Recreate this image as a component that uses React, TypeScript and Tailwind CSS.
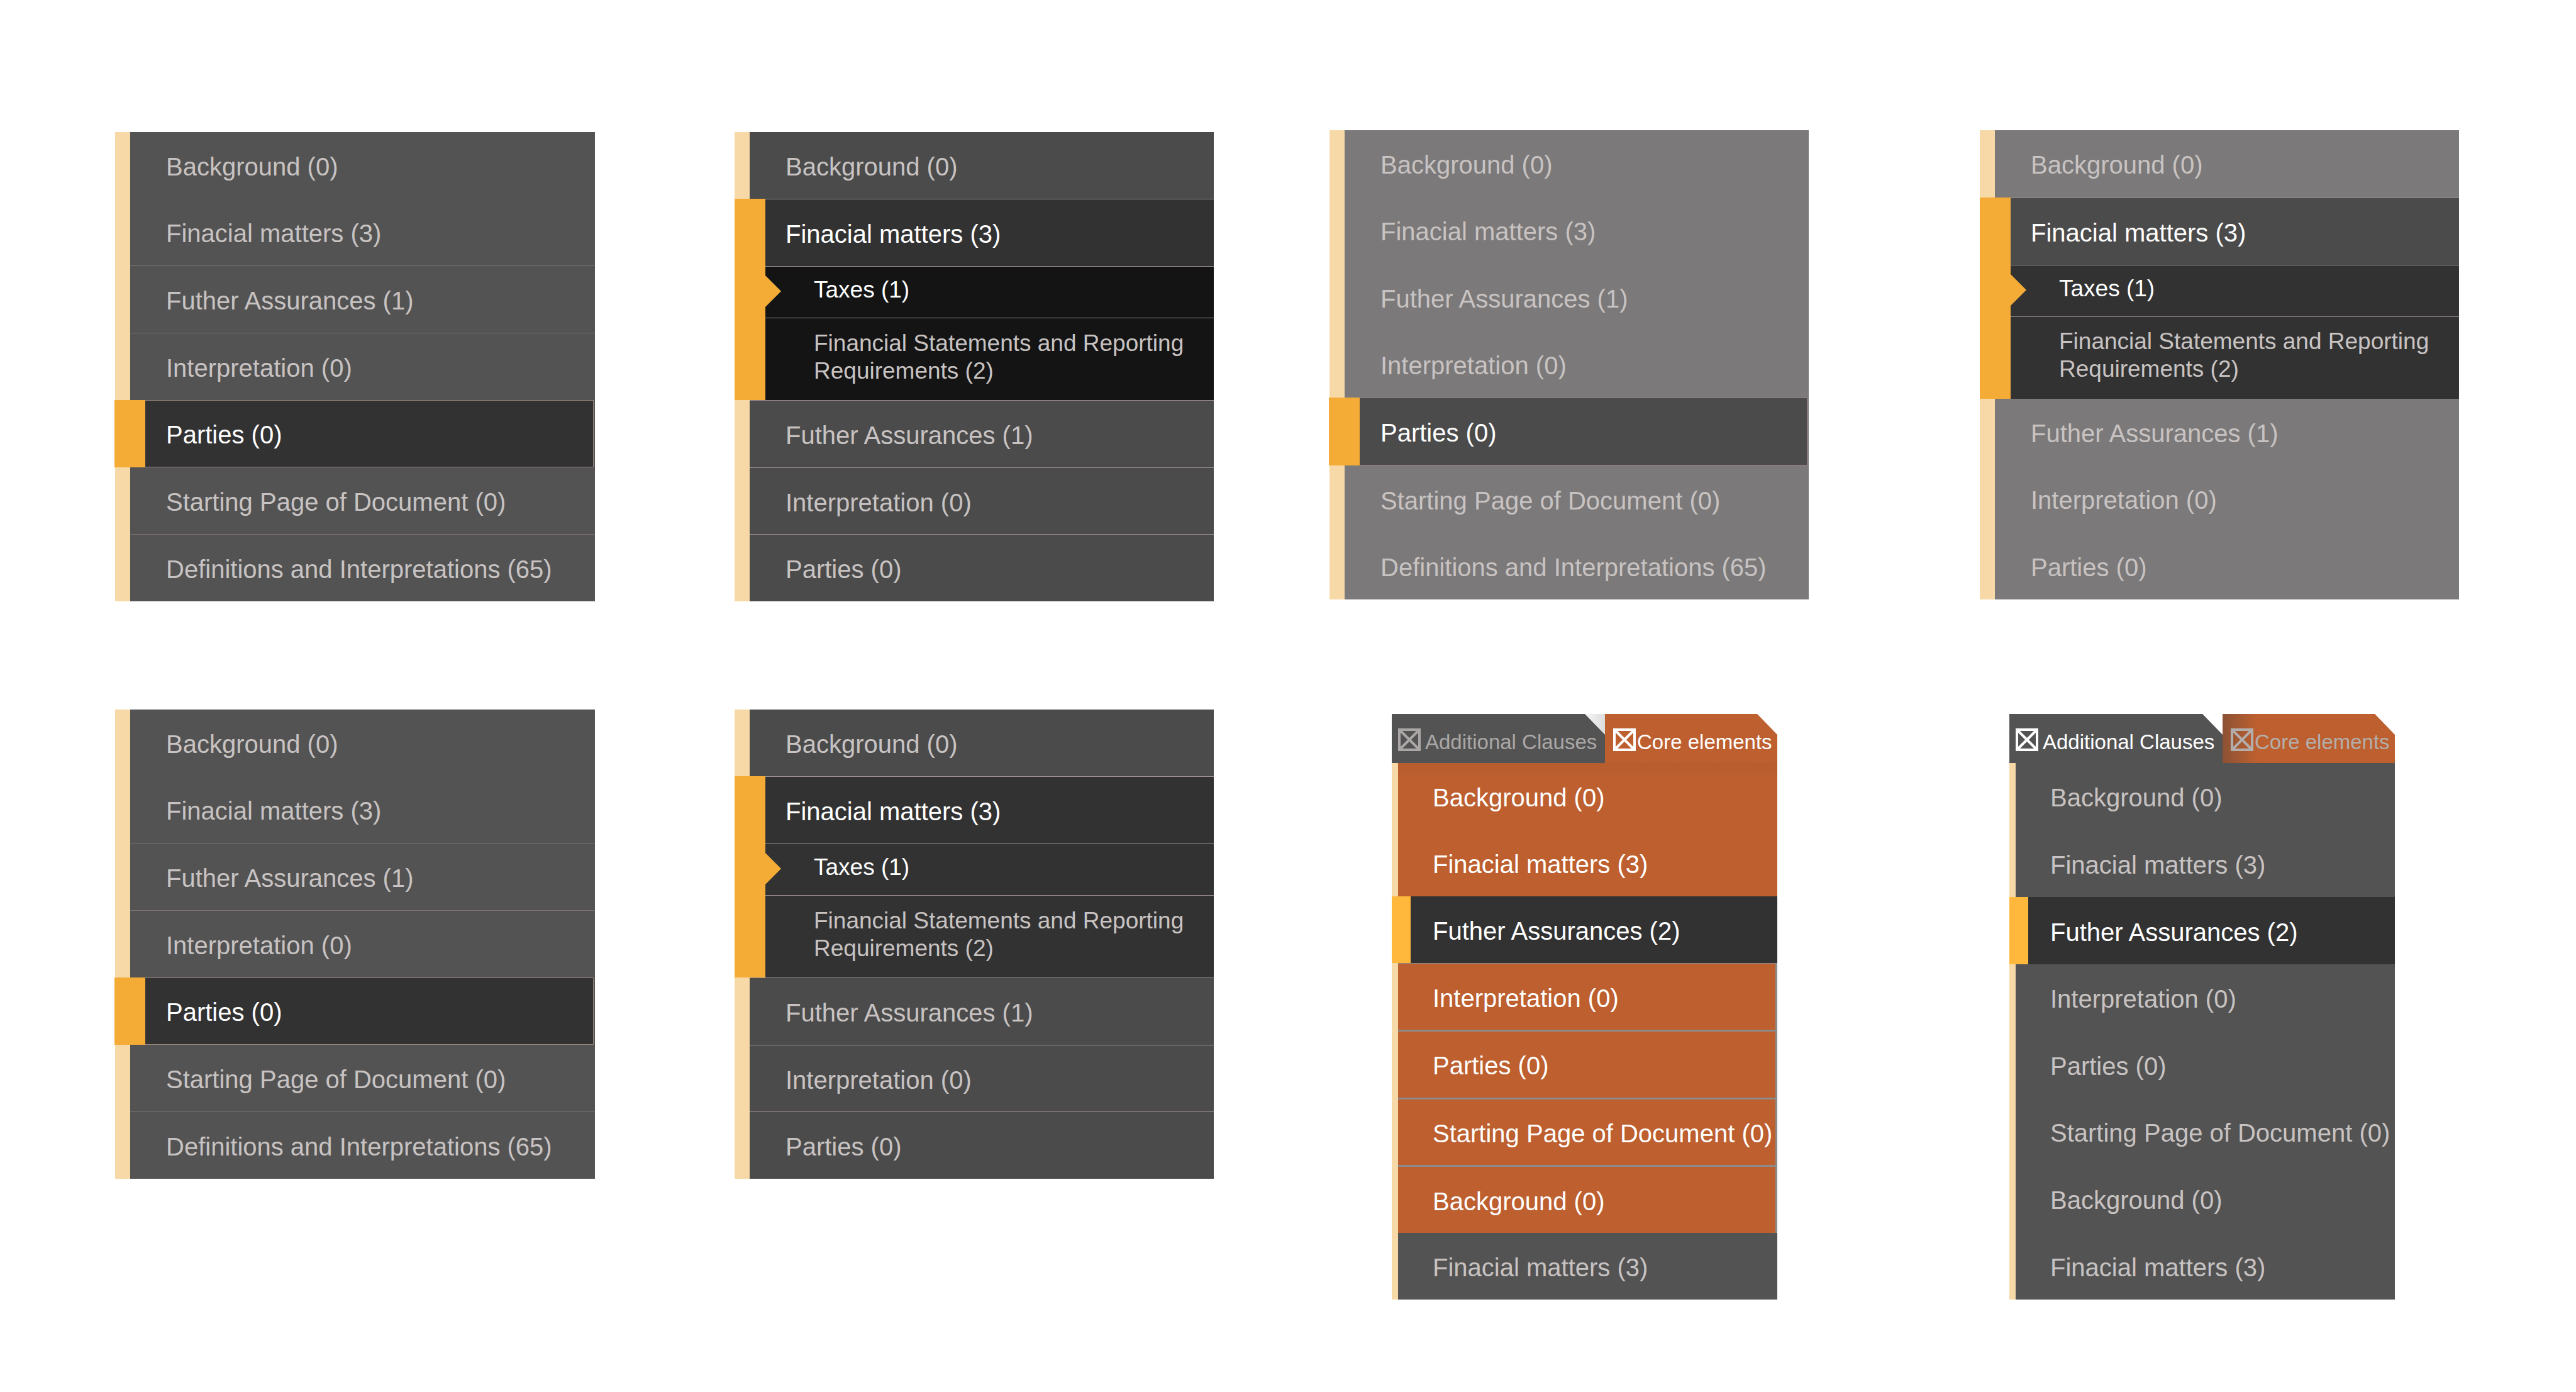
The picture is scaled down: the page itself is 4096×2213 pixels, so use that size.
import React from "react";

type Theme = {
  base: string;
  activeBg: string;
  subBg: string;
  line: string;
};

const CHARCOAL: Theme = {
  base: "bg-[#535353]",
  activeBg: "bg-[#323232]",
  subBg: "bg-[#323232]",
  line: "border-[#7a706e]",
};

const GRAPHITE: Theme = {
  base: "bg-[#4b4b4b]",
  activeBg: "bg-[#323232]",
  subBg: "bg-[#323232]",
  line: "border-[#9b8f8c]",
};

const GRAPHITE_DEEP: Theme = { ...GRAPHITE, subBg: "bg-[#141414]" };

const ASH: Theme = {
  base: "bg-[#7b7979]",
  activeBg: "bg-[#4b4b4b]",
  subBg: "bg-[#323232]",
  line: "border-[#9b8f8c]",
};

const ITEM_TEXT = "text-left text-[40px] leading-[44px] whitespace-nowrap";

type RowProps = {
  label: string;
  className: string;
};

function Row({ label, className }: RowProps) {
  return (
    <li className="flex min-h-[106px] flex-1 border-l-[24px] border-[#f7d9a7]">
      <button
        type="button"
        className={`flex flex-1 items-center pt-1 pl-[57px] text-[#c8c3c2] ${ITEM_TEXT} ${className}`}
      >
        {label}
      </button>
    </li>
  );
}

type MenuProps = {
  name: string;
  theme: Theme;
  divided?: boolean;
  className: string;
};

const FLAT_ITEMS = [
  { label: "Background (0)", divider: false },
  { label: "Finacial matters (3)", divider: false },
  { label: "Futher Assurances (1)", divider: true },
  { label: "Interpretation (0)", divider: true },
  { label: "Parties (0)", active: true, divider: false },
  { label: "Starting Page of Document (0)", divider: false },
  { label: "Definitions and Interpretations (65)", divider: true },
];

function FlatMenu({ name, theme, divided = false, className }: MenuProps) {
  return (
    <nav aria-label={name} className={className}>
      <ul className="flex min-h-[746px] flex-col">
        {FLAT_ITEMS.map((item) =>
          item.active ? (
            <li key={item.label} className={`relative flex min-h-[106px] flex-1 pr-[2px] ${theme.base}`}>
              <button
                type="button"
                aria-current="true"
                className={`flex flex-1 items-center border-y border-r border-[#98827c] pt-1 pl-[81px] text-white ${ITEM_TEXT} ${theme.activeBg}`}
              >
                {item.label}
              </button>
              <span className="absolute inset-y-0 -left-px w-[49px] bg-[#f4ac36]" />
            </li>
          ) : (
            <Row
              key={item.label}
              label={item.label}
              className={`${theme.base} ${divided && item.divider ? `border-t ${theme.line}` : ""}`}
            />
          ),
        )}
      </ul>
    </nav>
  );
}

function NestedMenu({ name, theme, divided = false, className }: MenuProps) {
  const divider = divided ? `border-t ${theme.line}` : "";
  const sub = `flex flex-1 items-center border-t pb-[7px] pl-[126px] text-left text-[37px] leading-[44px] ${theme.line} ${theme.subBg}`;
  return (
    <nav aria-label={name} className={className}>
      <ul className="flex min-h-[746px] flex-col">
        <Row label="Background (0)" className={theme.base} />
        <li className="relative flex flex-col">
          <button
            type="button"
            aria-expanded="true"
            className={`flex min-h-[107px] items-center border-t pt-1 pl-[81px] text-white ${ITEM_TEXT} ${theme.line} ${theme.activeBg}`}
          >
            Finacial matters (3)
          </button>
          <ul className="flex flex-col">
            <li className="flex min-h-[82px]">
              <button type="button" aria-current="true" className={`${sub} text-white`}>
                Taxes (1)
              </button>
            </li>
            <li className="flex min-h-[131px]">
              <button type="button" className={`${sub} text-[#c8c3c2]`}>
                Financial Statements and Reporting
                <br />
                Requirements (2)
              </button>
            </li>
          </ul>
          <span className="absolute inset-y-0 left-0 w-[49px] bg-[#f4ac36]" />
          <svg viewBox="0 0 26 52" aria-hidden="true" className="absolute top-[121px] left-[48px] h-[52px] w-[26px] fill-[#f4ac36]">
            <path d="M0 0L26 26L0 52Z" />
          </svg>
        </li>
        <Row
          label="Futher Assurances (1)"
          className={`${theme.base} ${divider}`}
        />
        <Row label="Interpretation (0)" className={`${theme.base} ${divider}`} />
        <Row label="Parties (0)" className={`${theme.base} ${divider}`} />
      </ul>
    </nav>
  );
}

type ClauseTabProps = {
  id: string;
  label: string;
  className: string;
  boxClass: string;
};

const NOTCH = "[clip-path:polygon(0_0,calc(100%-32px)_0,100%_33px,100%_100%,0_100%)]";

function ClauseTab({ id, label, className, boxClass }: ClauseTabProps) {
  return (
    <div className={`flex min-w-0 items-end pb-[19px] ${NOTCH} ${className}`}>
      <span className="relative flex h-9 w-9 flex-none">
        <input id={id} type="checkbox" defaultChecked className={`h-9 w-9 appearance-none border-4 ${boxClass}`} />
        <svg viewBox="0 0 36 36" aria-hidden="true" className="pointer-events-none absolute inset-0 h-9 w-9 fill-none stroke-current stroke-[4]">
          <path d="M4 4L32 32M32 4L4 32" />
        </svg>
      </span>
      <label htmlFor={id} className="text-[33px] leading-7 whitespace-nowrap">
        {label}
      </label>
    </div>
  );
}

const CLAUSE_ITEMS = [
  "Background (0)",
  "Finacial matters (3)",
  "Futher Assurances (2)",
  "Interpretation (0)",
  "Parties (0)",
  "Starting Page of Document (0)",
  "Background (0)",
  "Finacial matters (3)",
];

const ACTIVE_CLAUSE = 2;

function coreRowClass(index: number) {
  if (index === 7) return "bg-[#535353] text-[#c8c3c2]";
  if (index === 0) return "bg-linear-to-b from-[#b85c2e] to-[#bd5f2f] to-20% text-white";
  if (index === 1) return "bg-[#bd5f2f] text-white";
  if (index === 3) return "bg-[#bd5f2f] text-white border-t border-r-[3px] border-[#8d8b89]";
  return "bg-[#bd5f2f] text-white border-t-[3px] border-r-[3px] border-[#8d8b89]";
}

type TabbedMenuProps = {
  id: string;
  core: boolean;
  className: string;
};

function TabbedMenu({ id, core, className }: TabbedMenuProps) {
  return (
    <nav aria-label={core ? "Core elements" : "Additional clauses"} className={className}>
      <div className="grid min-h-[78px] grid-cols-[339fr_274fr]">
        <div className={`flex min-w-0 ${core ? "bg-linear-to-r from-white from-88% to-[#dcdcdc]" : ""}`}>
          <ClauseTab
            id={`${id}-additional`}
            label="Additional Clauses"
            className={`flex-1 gap-[7px] bg-[#535353] pl-[10px] ${core ? "text-[#aaa7a6]" : "text-white"}`}
            boxClass={core ? "border-[#aaa7a6]" : "border-white"}
          />
        </div>
        <ClauseTab
          id={`${id}-core`}
          label="Core elements"
          className={`gap-[2px] pl-[13px] ${
            core ? "bg-[#bd5f2f] text-white" : "bg-linear-to-r from-[#8c5234] to-[#bd5f2f] to-20% text-[#b3aeab]"
          }`}
          boxClass={core ? "border-white" : "border-[#b3aeab]"}
        />
      </div>
      <ul className="flex min-h-[853px] flex-col">
        {CLAUSE_ITEMS.map((label, index) => {
          const active = index === ACTIVE_CLAUSE;
          const tone = active
            ? "bg-[#323232] text-white"
            : core
              ? coreRowClass(index)
              : "bg-[#535353] text-[#c8c3c2]";
          return (
            <li key={index} className="relative flex min-h-[106px] flex-1 border-l-[10px] border-[#f7d9a7]">
              <button type="button" aria-current={active ? "true" : undefined} className={`flex flex-1 items-center pt-1 pl-[55px] ${ITEM_TEXT} ${tone}`}>
                {label}
              </button>
              {active && <span className="absolute inset-y-0 -left-[10px] w-[30px] bg-[#ffb73c]" />}
            </li>
          );
        })}
      </ul>
    </nav>
  );
}

export default function App() {
  return (
    <main className="flex min-h-screen flex-col bg-white pt-[207px] pb-[140px] font-['Liberation_Sans',Arial,sans-serif]">
      <section className="grid grid-cols-[183fr_763fr_222fr_762fr_184fr_762fr_272fr_762fr_186fr] items-start">
        <FlatMenu name="Charcoal menu" theme={CHARCOAL} divided className="col-start-2 mt-[3px]" />
        <NestedMenu name="Graphite menu, deep submenu" theme={GRAPHITE_DEEP} divided className="col-start-4 mt-[3px]" />
        <FlatMenu name="Ash menu" theme={ASH} className="col-start-6" />
        <NestedMenu name="Ash menu with submenu" theme={ASH} className="col-start-8" />
      </section>
      <section className="mt-[172px] grid grid-cols-[183fr_763fr_222fr_762fr_283fr_613fr_369fr_613fr_288fr] items-start">
        <FlatMenu name="Charcoal menu, second" theme={CHARCOAL} divided className="col-start-2" />
        <NestedMenu name="Graphite menu" theme={GRAPHITE} divided className="col-start-4" />
        <TabbedMenu id="core" core className="col-start-6 mt-[7px]" />
        <TabbedMenu id="additional" core={false} className="col-start-8 mt-[7px]" />
      </section>
    </main>
  );
}
